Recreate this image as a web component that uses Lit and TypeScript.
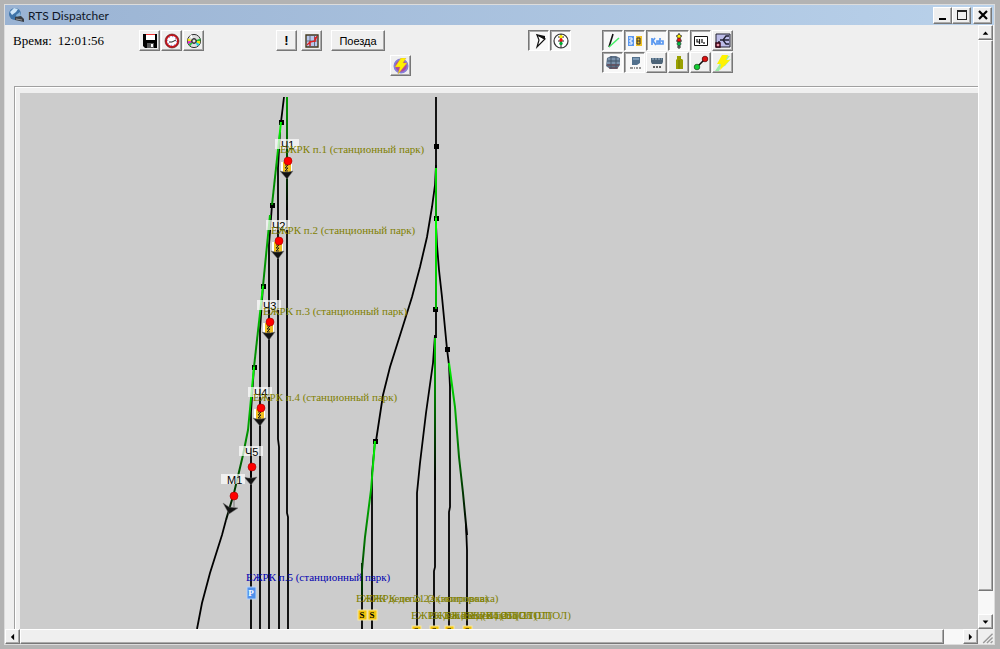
import { LitElement, html, css, svg } from "lit";
import { customElement, state } from "lit/decorators.js";
import { classMap } from "lit/directives/class-map.js";

const icons: Record<string, unknown> = {
  save: svg`<path d="M1 1h14v14H3l-2-2z" fill="#000"/><path d="M4 1h9v6H4z" fill="#fff"/><path d="M4 1h9v1H4z" fill="#e33"/><path d="M5 10h7v5H5z" fill="#555"/><path d="M9 11h2v3H9z" fill="#fff"/>`,
  clock: svg`<circle cx="8" cy="8" r="6" fill="#fff" stroke="#c4141c" stroke-width="2"/><circle cx="8" cy="8" r="7" fill="none" stroke="#511" stroke-width=".6"/><circle cx="8" cy="8" r="4.4" fill="none" stroke="#66c" stroke-dasharray="1 2.4"/><path d="M12 7L8 9H5" fill="none" stroke="#222"/>`,
  disc: svg`<circle cx="8" cy="8" r="6.6" fill="#ddd" stroke="#333"/><path d="M8 8L1.6 5.6v2.6z" fill="#f4e800"/><path d="M8 8L1.6 8.2l.8 3z" fill="#e020d0"/><path d="M8 8l-5.6 3 2 2z" fill="#20c040"/><path d="M8 8l6.4-2.4v2.6z" fill="#20c040"/><path d="M8 8l6.4.2-.8 3z" fill="#f4e800"/><path d="M8 8l5.6 3-2 2z" fill="#20d0e0"/><path d="M8 8l-4.4-5 2-1.2z" fill="#fff"/><circle cx="8" cy="8" r="2.4" fill="#888" stroke="#222"/><circle cx="8" cy="8" r="1" fill="#fff"/>`,
  graph: svg`<path d="M2 2h12v12H2z" fill="#b8c8ec" stroke="#43391f" stroke-width="1.4"/><path d="M6 2.500v11M10.500 2.500v11M2.500 8h11" stroke="#556" stroke-width=".8"/><path d="M3 12l3-3 5-1 2-5M6 8v5M11 4v5" stroke="#d22" stroke-width="1.3" fill="none"/>`,
  power: svg`<circle cx="8" cy="8" r="7" fill="#b0489c"/><circle cx="8" cy="8" r="6.6" fill="none" stroke="#8580d8" stroke-width="1.8"/><path d="M8 0h5l-3 5h4L5 16l2-7H2z" fill="#fff200" stroke="#d8a030" stroke-width=".4"/>`,
  pointer: svg`<path d="M6 2l8 4-8 8 2-7z" fill="#fff" stroke="#111" stroke-width="1.2"/><path d="M5 1l9 2v4l-3-2z" fill="#111"/>`,
  lightRing: svg`<circle cx="8" cy="8" r="7" fill="#fff" stroke="#333" stroke-width="1.2"/><path d="M8 1v14M5 4h6M5 8h6" stroke="#222"/><circle cx="8" cy="3.600" r="1.700" fill="#fe0"/><circle cx="8" cy="7" r="1.700" fill="#e11"/><circle cx="8" cy="10.400" r="1.700" fill="#0a3"/>`,
  tracks: svg`<path d="M8 1L4 14" stroke="#111" stroke-width="1.6"/><path d="M14 5L4 14" stroke="#4e6" stroke-width="1.5"/>`,
  blocks: svg`<path d="M1 3h6v10H1z" fill="#5a98f0"/><path d="M9 3h6v10H9z" fill="#f0c020"/><path d="M2 5h3v2H3v2h2v2H2" fill="none" stroke="#fff"/><path d="M10 5h3v6h-3zM10 8h3" fill="none" stroke="#333"/>`,
  names: svg`<path d="M3 5v7M3 9l3-4M4 8l3 4M8 8h2v3H8zM11 5v6h3V8h-2" fill="none" stroke="#5a98f0" stroke-width="1.7"/>`,
  light: svg`<path d="M8 0v16M5 3h6M5 8h6M6 14h4" stroke="#222"/><circle cx="8" cy="3.4" r="2" fill="#fe0" stroke="#222" stroke-width=".6"/><circle cx="8" cy="7" r="2" fill="#e11" stroke="#222" stroke-width=".6"/><circle cx="8" cy="10.8" r="2" fill="#0b4" stroke="#222" stroke-width=".6"/>`,
  plate: svg`<path d="M1.500 3.500h13v9h-13z" fill="#fff" stroke="#111"/><path d="M4 6v3h2M6.500 6v5M9 6v4M11 9v2" fill="none" stroke="#111" stroke-width="1.2"/>`,
  scheme: svg`<path d="M1 1h14v13H1z" fill="#bcbce8" stroke="#223"/><path d="M5 7h3l3-4h3M8 7h6M8 7l3 4h3M3 9h2" fill="none" stroke="#223" stroke-width="1.3"/><path d="M1 10h4v4H1z" fill="#e9a" stroke="#301" stroke-width="1.4"/>`,
  loco: svg`<path d="M2 3l4-2h5l4 2v7l-3 4H5l-4-3z" fill="#5c7188"/><path d="M3 4h11M2 8h13" stroke="#98b4d0"/><path d="M2 10h12M4 13h9" stroke="#713a40"/><path d="M6 1v13M11 2v11" stroke="#44566a"/>`,
  locoName: svg`<path d="M5 2h8v6l-3 2H5z" fill="#52708c"/><path d="M6 4h6" stroke="#a8c4e0"/><path d="M3 13h3M7 13h1M9 13h2M13 12v2" stroke="#333"/>`,
  wagon: svg`<path d="M2 3h12v4l-1 2H3L2 7z" fill="#4d6478"/><path d="M3 4h10" stroke="#9ab4cc" stroke-dasharray="2 1"/><path d="M4 12h8" stroke="#333" stroke-dasharray="2 1" stroke-width="1.6"/>`,
  person: svg`<path d="M6 1h4v3h1l1 1v9H5V5l1-1z" fill="#99a000"/><path d="M8 5v9" stroke="#747a00"/>`,
  link: svg`<path d="M4 12l8-8" stroke="#111" stroke-width="1.6"/><circle cx="4" cy="12" r="2.800" fill="#1c3" stroke="#141" stroke-width=".7"/><circle cx="12" cy="4" r="2.800" fill="#d11" stroke="#400" stroke-width=".7"/>`,
  flash: svg`<path d="M9 0l6 1-4 5 5-2-6 7-4 1-2 4-4 0 4-6z" fill="#9cebaa"/><path d="M7 0h6l-2 5h4L5 15l1-6H2z" fill="#fff200"/>`,
  up: svg`<path d="M8 6l3.500 4h-7z" fill="#000"/>`,
  down: svg`<path d="M8 10l3.500-4h-7z" fill="#000"/>`,
  left: svg`<path d="M6 8l4-4v8z" fill="#000"/>`,
  right: svg`<path d="M10 8L6 4v8z" fill="#000"/>`,
  min: svg`<path d="M4 11h7v2H4z" fill="#000"/>`,
  max: svg`<path d="M3 3h10v10H3zM4 5h8v7H4z" fill="#222" fill-rule="evenodd"/>`,
  close: svg`<path d="M4 4l8 8M12 4l-8 8" stroke="#000" stroke-width="2.200"/>`,
  globe: svg`<circle cx="7" cy="7" r="6" fill="#3f74a8"/><path d="M2 5l4-4 4 1-2 3-4 3z" fill="#cfe6f8"/><path d="M8 8l4-3 1 4-4 2z" fill="#87b3d8"/><path d="M7 10l6-1 3 3v3l-9-2z" fill="#3b3f45"/><path d="M8 12l6 1" stroke="#999"/>`,
};

const icon = (name: string) =>
  html`<svg class="icon" viewBox="0 0 16 16" aria-hidden="true">${icons[name]}</svg>`;

const BLACK_TRACKS = [
  "M284 97L281 122",
  "M280 132L278 168V439L279 447V629",
  "M287 180V513L288 517V629",
  "M272 205L269 245V360L269 364V629",
  "M263 286L260 330V629",
  "M254 367L251 412V629",
  "M226 520L222 535L210 573L202 603L197 629",
  "M436 97V168",
  "M436 165L435 185L432 207L427 237L420 267L412 297L402 329L390 367L383 395L376 441",
  "M375 441L372 474V629",
  "M362 563V629",
  "M436 309V338",
  "M435 335L433 363L426 413L420 463L417 493L417 520V629",
  "M435 470V567L434 571V629",
  "M436 225L437 245L439 270L442 297L447 349L449 365L450 387V507L449 512V629",
  "M466 525L467 550V629",
];

const GREEN_TRACKS = [
  { d: "M281 122L272 205", from: "#00ff00", to: "#008c00", y1: 122, y2: 180 },
  { d: "M287 97V210", from: "#00a000", to: "#000000", y1: 97, y2: 210 },
  { d: "M270 215L263 286", from: "#00c000", to: "#008000", y1: 215, y2: 286 },
  { d: "M263 286L254 367", from: "#00ff00", to: "#009000", y1: 286, y2: 340 },
  { d: "M254 367L248 430L243 455L234 493L226 520", from: "#00ff00", to: "#000000", y1: 367, y2: 525 },
  { d: "M436 168V218", from: "#00e800", to: "#009800", y1: 168, y2: 218 },
  { d: "M436 218V309", from: "#00ff00", to: "#00b000", y1: 218, y2: 309 },
  { d: "M435 338V480", from: "#00d000", to: "#000000", y1: 338, y2: 480 },
  { d: "M375 441L371 490L365 537L362 570V600", from: "#00ff00", to: "#002000", y1: 441, y2: 600 },
  { d: "M449 363L455 407L459 457L463 493L467 535", from: "#00f000", to: "#000000", y1: 363, y2: 530 },
];

const NODES = [
  [281, 122], [272, 205], [263, 286], [254, 367], [436, 146],
  [436, 218], [435, 309], [375, 441], [447, 349],
];

const SIGNALS = [
  { name: "Ч1", x: 287, y: 139, circle: 161, block: true },
  { name: "Ч2", x: 278, y: 220, circle: 241, block: true },
  { name: "Ч3", x: 269, y: 300, circle: 322, block: true },
  { name: "Ч4", x: 260, y: 387, circle: 408, block: true },
  { name: "Ч5", x: 251, y: 446, circle: 467, block: false },
];

const LABELS = [
  { x: 280, y: 153, text: "ЕЖРК п.1 (станционный парк)" },
  { x: 271, y: 234, text: "ЕЖРК п.2 (станционный парк)" },
  { x: 263, y: 315, text: "ЕЖРК п.3 (станционный парк)" },
  { x: 253, y: 401, text: "ЕЖРК п.4 (станционный парк)" },
  { x: 246, y: 581, text: "ЕЖРК п.5 (станционный парк)", blue: true },
  { x: 356, y: 602, text: "ЕЖРК депо 21 (экипировка)" },
  { x: 366, y: 602, text: "ЕЖРК депо 22 (экипировка)" },
  { x: 411, y: 619, text: "ЕЖРК депо 23 (ПТОЛ)" },
  { x: 429, y: 619, text: "ЕЖРК депо 24 (ПТОЛ)" },
  { x: 444, y: 619, text: "ЕЖРК депо 25 (ПТОЛ)" },
  { x: 463, y: 619, text: "ЕЖРК депо 26 (ПТОЛ)" },
];

const STOPS = [
  { x: 362, y: 615 }, { x: 372, y: 615 },
  { x: 416, y: 631 }, { x: 434, y: 631 }, { x: 449, y: 631 }, { x: 467, y: 631 },
];

@customElement("track-plan")
export class TrackPlan extends LitElement {
  static styles = css`
    :host { display: block; min-width: 0; min-height: 0; background: #ccc; overflow: hidden; }
    .plan { display: block; width: 100%; height: 100%; }
    .track { fill: none; stroke: #000; stroke-width: 1.8; }
    .green { fill: none; stroke-width: 2; }
    .label { font: 11px "Liberation Serif", serif; fill: #808000; }
    .blue { fill: #0000b0; }
    .tag { fill: #fff; fill-opacity: 0.7; }
    .signal { font: 11px "Liberation Sans", sans-serif; fill: #000; }
    .mark { font: bold 9px "Liberation Serif", serif; fill: #000; text-anchor: middle; }
    .light { fill: #fff; }
    .lamp { fill: #f00; stroke: #a00000; stroke-width: 0.6; }
  `;

  render() {
    return html`<svg class="plan" role="img" aria-label="ЕЖРК">
      <defs>
        ${GREEN_TRACKS.map((t, i) => svg`<linearGradient id="g${i}" gradientUnits="userSpaceOnUse" x1="0" x2="0" y1=${t.y1} y2=${t.y2}>
          <stop offset="0" stop-color=${t.from}/><stop offset="1" stop-color=${t.to}/></linearGradient>`)}
      </defs>
      <g transform="translate(-20 -93)">
        ${BLACK_TRACKS.map((d) => svg`<path class="track" d=${d}/>`)}
        ${NODES.map(([x, y]) => svg`<rect x=${x - 2} y=${y - 2} width="5" height="5"/>`)}
        ${GREEN_TRACKS.map((t, i) => svg`<path class="green" d=${t.d} stroke="url(#g${i})"/>`)}
        ${SIGNALS.map((s) => svg`
          <rect class="tag" x=${s.x - 12} y=${s.y} width="24" height="10"/>
          ${s.block ? svg`
            <rect x=${s.x - 6} y=${s.circle + 1} width="11" height="11" fill="#fff"/>
            <rect x=${s.x - 4} y=${s.circle + 1} width="8" height="11" fill="#f0c020"/>
            <path d="M${s.x - 2} ${s.circle + 4}h3l-3 3h3l-3 3h3" fill="none" stroke="#222"/>` : svg`
            <path d="M${s.x} ${s.circle}v12" stroke="#000" stroke-width="2"/>`}
          <path d="M${s.x - 7} ${s.circle + 10}l4 1h4l5 -1l-6 8z" fill="#111" stroke="#777" stroke-width=".5"/>
          <circle class="lamp" cx=${s.x + 1} cy=${s.circle} r="4"/>
          <text class="signal" x=${s.x - 6} y=${s.y + 10}>${s.name}</text>`)}
        <rect class="tag" x="221" y="474" width="24" height="10"/>
        <path d="M234 498v9" stroke="#777"/>
        <path d="M223 503l6 4l9 1l-9 6z" fill="#111" stroke="#777" stroke-width=".5"/>
        <circle class="lamp" cx="234" cy="496" r="4"/>
        <text class="signal" x="227" y="484">М1</text>
        <rect x="247" y="587" width="9" height="12" fill="#5090ec" stroke="#b8d4f8"/>
        <text class="mark light" x="251" y="596">P</text>
        ${STOPS.map((s) => svg`
          <rect x=${s.x - 4} y=${s.y - 5} width="9" height="10" fill="#f2c40c" stroke="#f8e8a0"/>
          <text class="mark" x=${s.x} y=${s.y + 3}>S</text>`)}
        ${LABELS.map((l) => svg`<text class="label ${l.blue ? "blue" : ""}" x=${l.x} y=${l.y}>${l.text}</text>`)}
      </g>
    </svg>`;
  }
}

type Tool = [name: string, title: string];

@customElement("app-root")
export class AppRoot extends LitElement {
  static styles = css`
    :host {
      display: flex; box-sizing: border-box; height: 100vh; padding: 4px 5px 4px 4px;
      background: #b3b3b3; font: 11px "Liberation Sans", sans-serif; color: #000;
    }
    * { box-sizing: border-box; }
    .window {
      flex: 1; min-width: 0; display: flex; flex-direction: column; background: #efefef;
      border: 1px solid #dcdcdc;
    }
    .title {
      display: flex; align-items: center; flex: none; height: 20px; padding: 0 2px 0 3px; gap: 4px;
      background: linear-gradient(90deg, #9ab3d3, #b9d1ea);
    }
    .title h1 { flex: 1; margin: 0; font: 12px Lato, sans-serif; color: #101828; }
    .title .icon { width: 16px; height: 16px; }
    .controls { display: flex; }
    .icon { display: block; width: 16px; height: 16px; }
    button {
      display: flex; align-items: center; justify-content: center; padding: 0; margin: 0;
      width: 21px; height: 21px; background: #efefef; color: #000;
      font: 11px "Liberation Sans", sans-serif;
      border: 1px solid; border-color: #fff #777 #777 #fff; box-shadow: inset -1px -1px #aaa;
    }
    .controls button { width: 19px; height: 17px; }
    .controls .close { margin-left: 2px; }
    .body { flex: 1; min-height: 0; display: grid; grid-template: minmax(0, 1fr) 15px / minmax(0, 1fr) 16px; }
    .content { display: flex; flex-direction: column; min-width: 0; min-height: 0; padding-left: 8px; }
    .tools {
      flex: none; display: grid; grid-template-columns: 126px 137px 114px 138px 74px auto;
      justify-content: start; height: 61px; padding-top: 5px;
    }
    .time { display: flex; gap: 6px; height: 22px; align-items: center; font: 13px "Liberation Serif", serif; }
    .row { display: flex; gap: 1px; height: 22px; }
    .wide-gap { gap: 4px; }
    .train { width: 54px; margin-left: 5px; }
    .bang { font-weight: bold; font-size: 13px; }
    .lower { padding-top: 25px; }
    button.on {
      border-color: #777 #fff #fff #777; box-shadow: inset 1px 1px #aaa; background: #f8f8f8;
    }
    .frame {
      flex: 1; min-height: 0; display: flex; margin-left: 1px; padding: 6px 0 0 5px;
      border-top: 1px solid #a0a0a0; border-left: 1px solid #a0a0a0;
      box-shadow: inset 1px 1px #fff;
    }
    track-plan { flex: 1; }
    .bar { display: flex; min-width: 0; min-height: 0; background: #f8f8f8; }
    .bar button { flex: none; width: 15px; height: 15px; }
    .vertical { flex-direction: column; }
    .thumb {
      background: #efefef; border: 1px solid; border-color: #fff #777 #777 #fff;
      box-shadow: inset -1px -1px #aaa;
    }
    .vertical .thumb { flex: 96 1 0; margin-right: 1px; }
    .vertical .track { flex: 4 1 0; }
    .horizontal .thumb { flex: 98 1 0; }
    .horizontal .track { flex: 2 1 0; }
    .grip { width: 16px; height: 15px; }
  `;

  @state() private active = new Set([
    "pointer", "lightRing", "tracks", "blocks", "names", "light", "plate", "loco", "locoName",
  ]);

  private toggle(name: string) {
    const next = new Set(this.active);
    if (!next.delete(name)) next.add(name);
    this.active = next;
  }

  private tool([name, title]: Tool) {
    return html`<button class=${classMap({ on: this.active.has(name) })} aria-label=${title}
      aria-pressed=${this.active.has(name)} @click=${() => this.toggle(name)}>${icon(name)}</button>`;
  }

  private command(name: string, title: string) {
    return html`<button aria-label=${title}>${icon(name)}</button>`;
  }

  render() {
    return html`<div class="window">
      <header class="title">
        ${icon("globe")}
        <h1>RTS Dispatcher</h1>
        <div class="controls">
          ${this.command("min", "Свернуть")}${this.command("max", "Развернуть")}
          <button class="close" aria-label="Закрыть">${icon("close")}</button>
        </div>
      </header>
      <main class="body">
        <section class="content">
          <div class="tools">
            <div class="time"><span>Время:</span><time>12:01:56</time></div>
            <div class="row">
              ${this.command("save", "Сохранить")}${this.command("clock", "Часы")}${this.command("disc", "Диск")}
            </div>
            <div class="row wide-gap">
              <button class="bang">!</button>${this.command("graph", "График")}
              <button class="train">Поезда</button>
            </div>
            <div class="lower">${this.command("power", "Питание")}</div>
            <div class="row">
              ${([["pointer", "Стрелки"], ["lightRing", "Светофоры"]] as Tool[]).map((t) => this.tool(t))}
            </div>
            <div>
              <div class="row">
                ${([["tracks", "Пути"], ["blocks", "Блоки"], ["names", "Названия"], ["light", "Сигналы"],
                  ["plate", "Таблички"], ["scheme", "Схема"]] as Tool[]).map((t) => this.tool(t))}
              </div>
              <div class="row">
                ${([["loco", "Локомотивы"], ["locoName", "Номера"], ["wagon", "Вагоны"], ["person", "Машинист"],
                  ["link", "Маршрут"], ["flash", "Ток"]] as Tool[]).map((t) => this.tool(t))}
              </div>
            </div>
          </div>
          <div class="frame"><track-plan></track-plan></div>
        </section>
        <div class="bar vertical">
          ${this.command("up", "Вверх")}<div class="thumb"></div><div class="track"></div>${this.command("down", "Вниз")}
        </div>
        <div class="bar horizontal">
          ${this.command("left", "Влево")}<div class="thumb"></div><div class="track"></div>${this.command("right", "Вправо")}
        </div>
        <svg class="grip" viewBox="0 0 16 16" aria-hidden="true">
          <path d="M5 15L15 5M9 15l6-6M13 15l2-2" stroke="#999" stroke-width="1.500"/>
        </svg>
      </main>
    </div>`;
  }
}
